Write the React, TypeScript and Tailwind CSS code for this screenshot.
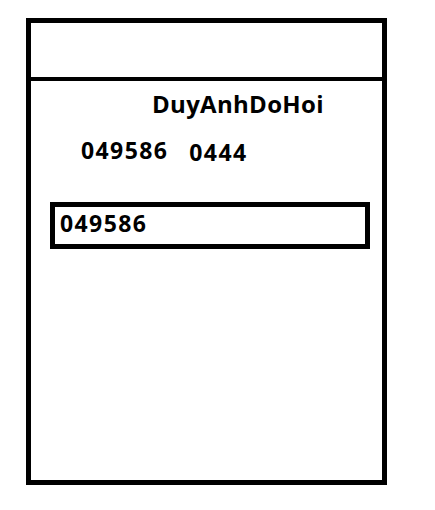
export default function App() {
  return (
    <div className="min-h-screen bg-white pl-[26px] pt-[18px] font-['Open_Sans',sans-serif] font-bold text-black">
      <div className="flex h-[467px] w-[361px] flex-col border-[5px] border-black">
        <div className="h-[58px] border-b-[4px] border-black" />
        <div className="flex flex-col pt-[11px]">
          <div className="pl-[121px] text-[24px] leading-none tracking-[0.3px]">DuyAnhDoHoi</div>
          <div className="mt-[23px] flex items-start pl-[50px] text-[23px] leading-none tracking-[1.4px]">
            <span>049586</span>
            <span className="ml-[21px] mt-[2px]">0444</span>
          </div>
          <div className="ml-[19px] mt-[38px] h-[47px] w-[320px] border-[5px] border-black pl-[5px] pt-[5px] text-[23px] leading-none tracking-[1.4px]">
            049586
          </div>
        </div>
      </div>
    </div>
  );
}
